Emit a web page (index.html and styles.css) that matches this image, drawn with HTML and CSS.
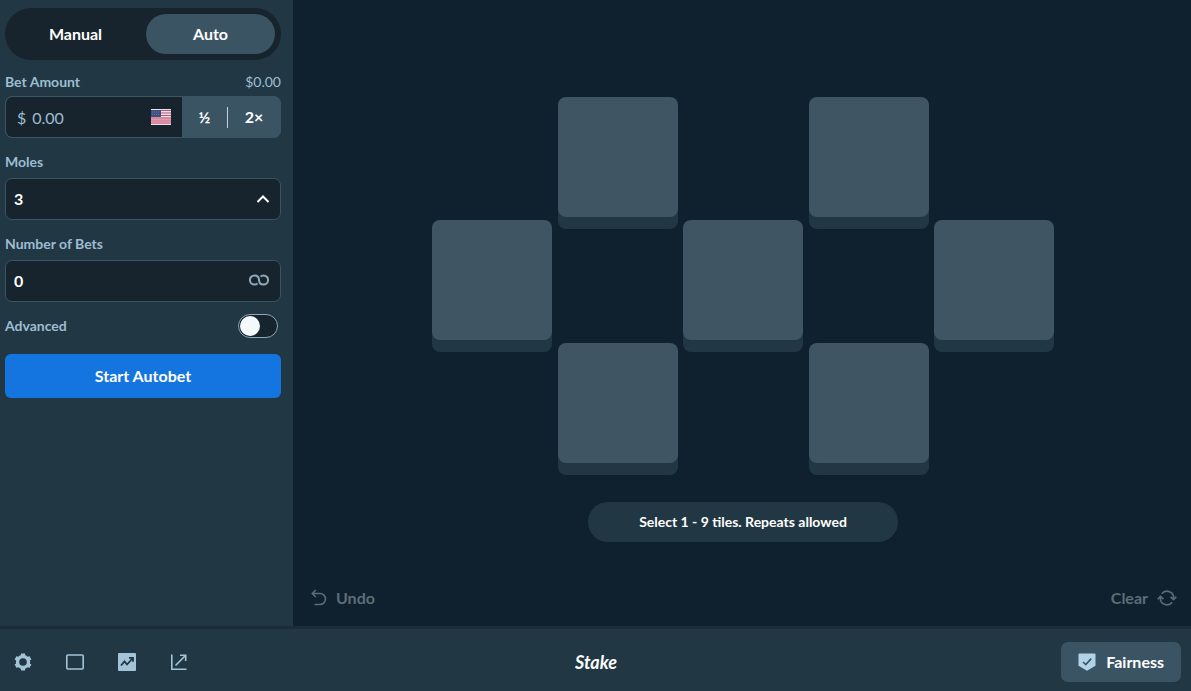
FILE: index.html
```html
<!DOCTYPE html>
<html lang="en">
<head>
  <meta charset="UTF-8">
  <meta name="viewport" content="width=device-width, initial-scale=1.0">
  <title>Moles</title>
  <link rel="stylesheet" href="styles.css">
</head>
<body>
  <div class="game">
    <!-- Bet controls -->
    <form class="sidebar">
      <div class="tabs">
        <button type="button" class="tab">Manual</button>
        <button type="button" class="tab active">Auto</button>
      </div>

      <div class="field bet-field">
        <div class="label-row">
          <label for="amount">Bet Amount</label>
          <span class="converted">$0.00</span>
        </div>
        <div class="bet-box">
          <div class="amount-box">
            <span class="currency">$</span>
            <input class="amount" id="amount" type="text" value="0.00">
            <svg class="flag" width="20" height="16" viewBox="0 0 20 16">
              <rect width="20" height="16" fill="#e8e4ee"/>
              <path d="M10 1.5h10M10 4h10M10 6.5h10" stroke="#b85470" stroke-width="1.2"/>
              <rect y="8" width="20" height="7" fill="#d8879f"/>
              <path d="M0 10.5h20M0 13h20" stroke="#dc9aae" stroke-width="1"/>
              <rect y="1" width="10" height="7" fill="#3b5280"/>
              <path d="M1 3h8M1 5.500h8" stroke="#6278a0" stroke-width="1" stroke-dasharray="1 1"/>
            </svg>
          </div>
          <button type="button" class="half">½</button>
          <span class="divider"></span>
          <button type="button" class="double">2×</button>
        </div>
      </div>

      <div class="field">
        <label for="moles">Moles</label>
        <div class="input-box">
          <select id="moles">
            <option>1</option>
            <option>2</option>
            <option selected>3</option>
            <option>4</option>
          </select>
          <svg class="chevron" width="14" height="10" viewBox="0 0 14 10">
            <path d="M1.500 8L7 2.500L12.500 8" fill="none" stroke="#fff" stroke-width="2"/>
          </svg>
        </div>
      </div>

      <div class="field">
        <label for="bets">Number of Bets</label>
        <div class="input-box">
          <input id="bets" type="text" value="0">
          <svg class="infinity" width="20" height="12" viewBox="0 0 20 12">
            <path d="M8.500 9.300C7.600 10.300 6.600 10.600 5.500 10.600A4.600 4.600 0 1 1 5.500 1.400C8.500 1.400 10 3.500 10 6C10 8.500 11.500 10.600 14.500 10.600A4.600 4.600 0 1 0 14.500 1.400C13.400 1.400 12.400 1.700 11.500 2.700" fill="none" stroke="#8fa9b8" stroke-width="2"/>
          </svg>
        </div>
      </div>

      <div class="advanced">
        <label for="advanced">Advanced</label>
        <input class="switch" id="advanced" type="checkbox">
      </div>

      <button type="button" class="start">Start Autobet</button>
    </form>

    <!-- Board -->
    <main class="stage">
      <div class="board">
        <button class="tile col-2" aria-label="Tile 1"></button>
        <button class="tile col-4" aria-label="Tile 2"></button>
        <button class="tile col-1" aria-label="Tile 3"></button>
        <button class="tile col-3" aria-label="Tile 4"></button>
        <button class="tile col-5" aria-label="Tile 5"></button>
        <button class="tile col-2" aria-label="Tile 6"></button>
        <button class="tile col-4" aria-label="Tile 7"></button>
      </div>
      <p class="hint">Select 1 - 9 tiles. Repeats allowed</p>
      <div class="actions">
        <button class="action">
          <svg width="18" height="18" viewBox="0 0 18 18" fill="none" stroke="#5b6d79" stroke-width="1.600">
            <path d="M3.500 4.500H11A5.500 5.500 0 0 1 11 15.500H5.500"/>
            <path d="M6.800 1L3.300 4.500L6.800 8"/>
          </svg>
          Undo
        </button>
        <button class="action">
          Clear
          <svg width="20" height="18" viewBox="0 0 20 18" fill="none" stroke="#5b6d79" stroke-width="1.600">
            <path d="M4.800 4.800A6.600 6.600 0 0 1 16.600 9.500M15.200 13.200A6.600 6.600 0 0 1 3.400 8.500"/>
            <path d="M13.600 7.800L16.600 10.600L19.300 7.800M0.700 10.200L3.400 7.400L6.400 10.200"/>
          </svg>
        </button>
      </div>
    </main>
  </div>

  <footer class="footer">
    <div class="tools">
      <button class="tool" aria-label="Settings">
        <svg width="18" height="18" viewBox="0 0 18 18">
          <circle cx="9" cy="9" r="5.500" fill="none" stroke="#a3c3d6" stroke-width="3.400"/>
          <path d="M9 .5V3M9 15v2.500M1.600 4.700L3.800 6M14.200 12l2.200 1.300M1.600 13.300L3.800 12M14.200 6l2.200-1.300" stroke="#a3c3d6" stroke-width="4.200"/>
          <circle cx="9" cy="9" r="2.800" fill="#213743"/>
        </svg>
      </button>
      <button class="tool" aria-label="Theatre mode">
        <svg width="20" height="18" viewBox="0 0 20 18">
          <rect x="1.800" y="2" width="16.400" height="14" rx="1" fill="none" stroke="#a3c3d6" stroke-width="1.600"/>
        </svg>
      </button>
      <button class="tool" aria-label="Live stats">
        <svg width="18" height="18" viewBox="0 0 18 18">
          <rect width="18" height="18" rx="1" fill="#a3c3d6"/>
          <path d="M3 12.500L6.500 8.500L9 11.500L14.500 5.500M11 4.800H15V8.800" fill="none" stroke="#213743" stroke-width="1.800"/>
        </svg>
      </button>
      <button class="tool" aria-label="Pop out">
        <svg width="18" height="18" viewBox="0 0 18 18" fill="none" stroke="#a3c3d6" stroke-width="1.600">
          <path d="M1.800 1.500V16.200H16.500M5.500 12.500L15.500 2.500M10 2.300H15.700V8"/>
        </svg>
      </button>
    </div>
    <a class="logo" href="#">Stake</a>
    <button class="fairness">
      <svg width="18" height="18" viewBox="0 0 18 18">
        <path d="M1.500.5h15a1 1 0 0 1 1 1V12.800L9 17.800L.5 12.800V1.500a1 1 0 0 1 1-1z" fill="#b1d3ea"/>
        <path d="M5 9L7.800 11.600L13.200 5.600" fill="none" stroke="#3a5463" stroke-width="1.600"/>
      </svg>
      <span>Fairness</span>
    </button>
  </footer>
</body>
</html>
```

FILE: styles.css
```css
* {
  box-sizing: border-box;
}

body {
  display: flex;
  flex-direction: column;
  min-height: 100vh;
  margin: 0;
  background-color: #0f212e;
  color: #fff;
  font-family: Lato, "Liberation Sans", sans-serif;
  font-size: 16px;
}

button,
input,
select {
  margin: 0;
  padding: 0;
  border: none;
  background: none;
  color: inherit;
  font: inherit;
}

button {
  cursor: pointer;
  font-weight: 700;
}

svg {
  flex: none;
}

.game {
  display: flex;
  flex: 1;
}

/* Sidebar */
.sidebar {
  flex: none;
  width: 293px;
  padding: 8px 12px 16px 5px;
  background-color: #213743;
}

.tabs {
  display: flex;
  gap: 6px;
  padding: 6px;
  margin-bottom: 14px;
  border-radius: 26px;
  background-color: #17242d;
}

.tab {
  flex: 1;
  height: 40px;
  padding-bottom: 2px;
  border-radius: 20px;
}

.tab.active {
  background-color: #3a5463;
}

.field {
  display: flex;
  flex-direction: column;
  gap: 8px;
  margin-bottom: 16px;
}

.bet-field {
  gap: 6px;
}

label,
.converted {
  color: #9dbdd2;
  font-size: 14px;
  font-weight: 700;
  line-height: 16px;
}

.converted {
  font-weight: 400;
}

.label-row {
  display: flex;
  justify-content: space-between;
}

.bet-box {
  display: flex;
  align-items: center;
  height: 42px;
  border: 1px solid #3a5463;
  border-radius: 7px;
  background-color: #3a5463;
  overflow: hidden;
}

.amount-box {
  display: flex;
  flex: 1;
  align-items: center;
  gap: 6px;
  min-width: 0;
  height: 40px;
  padding: 0 11px;
  border-radius: 6px 0 0 6px;
  background-color: #17242d;
  color: #9dbdd2;
}

.amount {
  flex: 1;
  min-width: 0;
}

.half {
  width: 45px;
  height: 40px;
  padding-bottom: 2px;
}

.divider {
  width: 1px;
  height: 21px;
  background-color: #c4d4de;
}

.double {
  width: 52px;
  height: 40px;
  padding-bottom: 2px;
}

.input-box {
  position: relative;
  height: 42px;
  border: 1px solid #3a5463;
  border-radius: 7px;
  background-color: #17242d;
}

.input-box input,
.input-box select {
  width: 100%;
  height: 40px;
  padding: 0 8px 2px;
  appearance: none;
  font-weight: 700;
}

.chevron,
.infinity {
  position: absolute;
  top: 15px;
  right: 10px;
  pointer-events: none;
}

.infinity {
  top: 13px;
  right: 11px;
}

.advanced {
  display: flex;
  align-items: center;
  justify-content: space-between;
  margin: -4px 3px 16px 0;
}

.switch {
  display: flex;
  align-items: center;
  width: 40px;
  height: 24px;
  padding: 1px;
  appearance: none;
  border: 1px solid #8fa9b8;
  border-radius: 12px;
  background-color: #17242d;
  cursor: pointer;
}

.switch::before {
  content: "";
  width: 20px;
  height: 20px;
  border-radius: 50%;
  background-color: #f4f9fc;
}

.switch:checked {
  justify-content: flex-end;
}

.start {
  width: 100%;
  height: 44px;
  padding-bottom: 2px;
  border-radius: 6px;
  background-color: #1475e1;
}

/* Board */
.stage {
  display: flex;
  flex: 1;
  flex-direction: column;
  align-items: center;
  padding: 97px 14px 18px 16px;
}

.board {
  display: grid;
  grid-template-columns: repeat(5, 120px);
  grid-auto-rows: 120px;
  justify-content: space-between;
  row-gap: 3px;
  width: 622px;
}

.tile {
  border-radius: 8px;
  background-color: #3f5564;
  box-shadow: 0 12px 0 #213743;
}

.col-1 { grid-column: 1; }
.col-2 { grid-column: 2; }
.col-3 { grid-column: 3; }
.col-4 { grid-column: 4; }
.col-5 { grid-column: 5; }

.hint {
  margin: 39px 0 0;
  padding: 0 51px;
  border-radius: 20px;
  background-color: #213743;
  font-size: 14px;
  font-weight: 700;
  line-height: 40px;
}

.actions {
  display: flex;
  align-self: stretch;
  justify-content: space-between;
  margin-top: auto;
}

.action {
  display: flex;
  align-items: center;
  gap: 9px;
  color: #5b6d79;
  line-height: 20px;
}

/* Footer */
.footer {
  display: grid;
  grid-template-columns: 1fr auto 1fr;
  align-items: center;
  padding: 13px 10px 9px 11px;
  border-top: 3px solid #1b2d38;
  background-color: #213743;
}

.tools {
  display: flex;
  gap: 28px;
}

.tool {
  display: flex;
  align-items: center;
  justify-content: center;
  width: 24px;
  height: 24px;
}

.logo {
  color: #fff;
  font-size: 18px;
  font-style: italic;
  font-weight: 700;
  line-height: 24px;
  text-decoration: none;
}

.fairness {
  display: flex;
  align-items: center;
  justify-self: end;
  gap: 10px;
  height: 40px;
  padding: 0 17px;
  border-radius: 7px;
  background-color: #3a5463;
}

.fairness span {
  padding-bottom: 2px;
}
```
